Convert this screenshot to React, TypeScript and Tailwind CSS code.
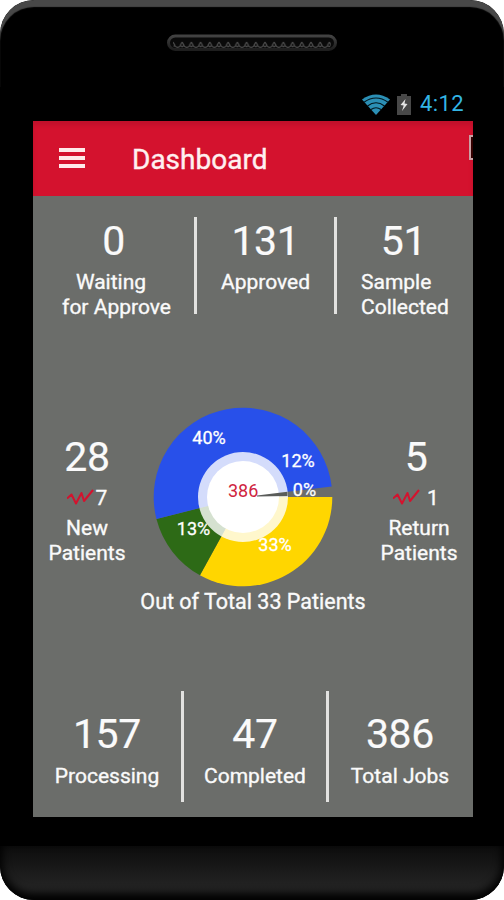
import type { ReactNode } from "react";

const slices = [
  { from: 0, to: 118.8, color: "#ffd600" },
  { from: 118.8, to: 165.7, color: "#2d6a16" },
  { from: 165.7, to: 353.3, color: "#2850ea" },
];

const pieLabels = [
  { text: "40%", x: 56, y: 36.5 },
  { text: "12%", x: 145, y: 59.5 },
  { text: "0%", x: 151.5, y: 89 },
  { text: "13%", x: 40.5, y: 127.5 },
  { text: "33%", x: 122, y: 143.5 },
];

const C = 90;
const R = 89.3;

function slicePath(from: number, to: number) {
  const p = (deg: number) => {
    const a = (deg * Math.PI) / 180;
    return `${C + R * Math.cos(a)} ${C + R * Math.sin(a)}`;
  };
  return `M${C} ${C} L${p(from)} A${R} ${R} 0 ${to - from > 180 ? 1 : 0} 1 ${p(to)} Z`;
}

function Value({ children }: { children: ReactNode }) {
  return <div className="text-[41px] leading-[42px] tracking-[-0.3px] [-webkit-text-stroke:0.2px]">{children}</div>;
}

function Divider() {
  return <div className="w-[3px] shrink-0 bg-[#e2e2e0]" />;
}

function Trend() {
  return (
    <svg className="mb-[3px]" width="28" height="18" viewBox="0 0 28 18" fill="none" stroke="#d4122e" strokeWidth="2" strokeLinejoin="round">
      <path d="M0 10.5 L4.5 6.5 L9 15.5 L14.5 5 L17 13 L26 2" />
    </svg>
  );
}

function Speaker() {
  return (
    <svg width="170" height="18" viewBox="0 0 170 18">
      <defs>
        <pattern id="mesh" width="9.2" height="9" patternUnits="userSpaceOnUse" x="6" y="5">
          <path d="M0 3 L1.8 6.2 L0 8 M9.2 3 L7.4 6.2 L9.2 8 M1.8 6.8 Q4.6 10 7.4 6.8" stroke="#4a4a4a" strokeWidth="1.2" fill="none" />
        </pattern>
        <linearGradient id="rim" x1="0" y1="0" x2="0" y2="1">
          <stop offset="0" stopColor="#424242" />
          <stop offset="1" stopColor="#1e1e1e" />
        </linearGradient>
      </defs>
      <rect x="1.5" y="2" width="167" height="13.5" rx="6.75" fill="#0a0a0a" stroke="url(#rim)" strokeWidth="3" />
      <rect x="6" y="5" width="158" height="9" rx="4" fill="url(#mesh)" />
    </svg>
  );
}

function StatusBar() {
  return (
    <div className="flex h-[34px] items-center justify-end pr-[9px] text-[#33b5e5]">
      <svg width="28" height="21" viewBox="0 0 28 21">
        <path d="M0 5.5 Q14 -4.5 28 5.5 L14 21 Z" fill="#2b8fb5" />
        <path d="M2 8.3 Q14 -.2 26 8.3 M5.5 12 Q14 5.5 22.5 12 M9 15.5 Q14 12 19 15.5" fill="none" stroke="#02151d" strokeWidth="1.1" />
      </svg>
      <svg className="ml-[7px]" width="14" height="21" viewBox="0 0 14 21">
        <path d="M4 0 H10 V2 H14 V21 H0 V2 H4 Z" fill="#484848" />
        <path d="M8.5 5 L3.5 11 L6.7 11.6 L5 17 L10.5 10 L7.5 9.4 Z" fill="#e5e5e5" />
      </svg>
      <span className="ml-[9px] text-[22px] leading-[22px] tracking-[0.4px]">4:12</span>
    </div>
  );
}

function PatientChart() {
  return (
    <svg className="block" width="180" height="180" viewBox="0 0 180 180">
      {slices.map((s) => (
        <path key={s.color} d={slicePath(s.from, s.to)} fill={s.color} />
      ))}
      <circle cx={C} cy={C} r="45" fill="#fff" fillOpacity="0.8" />
      <circle cx={C} cy={C} r="36" fill="#fff" />
      <path d="M104 88.5 L134.5 84.7 V89 L104 89.6 Z" fill="#5a5c5a" />
      <text x="75" y="90" fontSize="18" fill="#cf2440" strokeWidth="0">
        386
      </text>
      {pieLabels.map((l) => (
        <text key={l.text} x={l.x} y={l.y} textAnchor="middle" fontSize="18" fill="#fff" stroke="#fff" strokeWidth="0.3">
          {l.text}
        </text>
      ))}
    </svg>
  );
}

function SideStat({ value, change, label }: { value: ReactNode; change: ReactNode; label: string }) {
  return (
    <div className="w-[108px] pt-[29px] text-center">
      <Value>{value}</Value>
      <div className="flex items-center justify-center pt-2 leading-[25px]">{change}</div>
      <div className="mx-auto w-20 pt-[5px]">
        {label}
        <br />
        Patients
      </div>
    </div>
  );
}

export default function App() {
  return (
    <div className="h-[900px] w-[504px] overflow-hidden bg-white font-['Roboto',sans-serif]">
      <div className="flex h-full flex-col overflow-hidden rounded-[34px] bg-black">
        <div className="h-[87px] shrink-0 rounded-t-[34px] shadow-[inset_0_7px_1px_#484848]">
          <div className="flex justify-center pt-[34px]">
            <Speaker />
          </div>
        </div>

        <div className="ml-[33px] w-[440px]">
          <StatusBar />

          <header className="flex h-[75px] items-center bg-[#d4122e] pl-[26px] shadow-[inset_0_4px_4px_#c0102b]">
            <div className="mb-[2px] flex w-[26px] flex-col gap-[4px]">
              <span className="h-[4px] bg-[#ffeaea]" />
              <span className="h-[4px] bg-[#ffeaea]" />
              <span className="h-[4px] bg-[#ffeaea]" />
            </div>
            <h1 className="mt-[2px] ml-[47px] text-[28px] leading-8 text-[#fff0f0] [-webkit-text-stroke:0.4px]">Dashboard</h1>
            <div className="mb-[23px] ml-auto h-[25px] w-1 border-y-2 border-l-2 border-[#c9a0a4] bg-[#300]" />
          </header>

          <main className="h-[621px] bg-[#6b6d6a] pt-[21px] text-[21px] leading-[24.5px] text-[#fafafa] [-webkit-text-stroke:0.35px]">
            <section className="flex h-[97px] text-center">
              <div className="w-[161px] pt-[3px]">
                <Value>0</Value>
                <div className="pt-2">
                  <div className="pr-[5px]">Waiting</div>
                  <div className="pl-[6px] whitespace-nowrap">for Approve</div>
                </div>
              </div>
              <Divider />
              <div className="w-[137px] pt-[3px]">
                <Value>131</Value>
                <div className="pt-2">Approved</div>
              </div>
              <Divider />
              <div className="w-[136px] pt-[3px]">
                <Value>
                  <span className="pr-[3px]">51</span>
                </Value>
                <div className="pt-2 pl-[24px] text-left">
                  Sample
                  <br />
                  Collected
                </div>
              </div>
            </section>

            <section className="mt-[93px] flex">
              <SideStat
                value="28"
                change={
                  <>
                    <Trend />
                    <span className="ml-px">7</span>
                  </>
                }
                label="New"
              />
              <div className="ml-[12px]">
                <PatientChart />
              </div>
              <div className="ml-[32px]">
                <SideStat
                  value={<span className="pr-[6px]">5</span>}
                  change={
                    <>
                      <Trend />
                      <span className="mr-[6px] ml-[6px]">1</span>
                    </>
                  }
                  label="Return"
                />
              </div>
            </section>
            <p className="mt-[3px] text-center text-[21.5px]">Out of Total 33 Patients</p>

            <section className="mt-[76px] flex h-[111px] text-center">
              <div className="w-[148px] pt-[22px]">
                <Value>157</Value>
                <div className="pt-[9px]">Processing</div>
              </div>
              <Divider />
              <div className="w-[142px] pt-[22px]">
                <Value>47</Value>
                <div className="pt-[9px]">Completed</div>
              </div>
              <Divider />
              <div className="w-[142px] pt-[22px]">
                <Value>386</Value>
                <div className="pt-[9px]">Total Jobs</div>
              </div>
            </section>
          </main>
        </div>

        <div className="mt-[29px] flex-1 rounded-b-[32px] bg-linear-to-b from-[#0d0d0d] to-[#2b2b2b] shadow-[inset_0_-5px_8px_2px_#000]" />
      </div>
    </div>
  );
}
